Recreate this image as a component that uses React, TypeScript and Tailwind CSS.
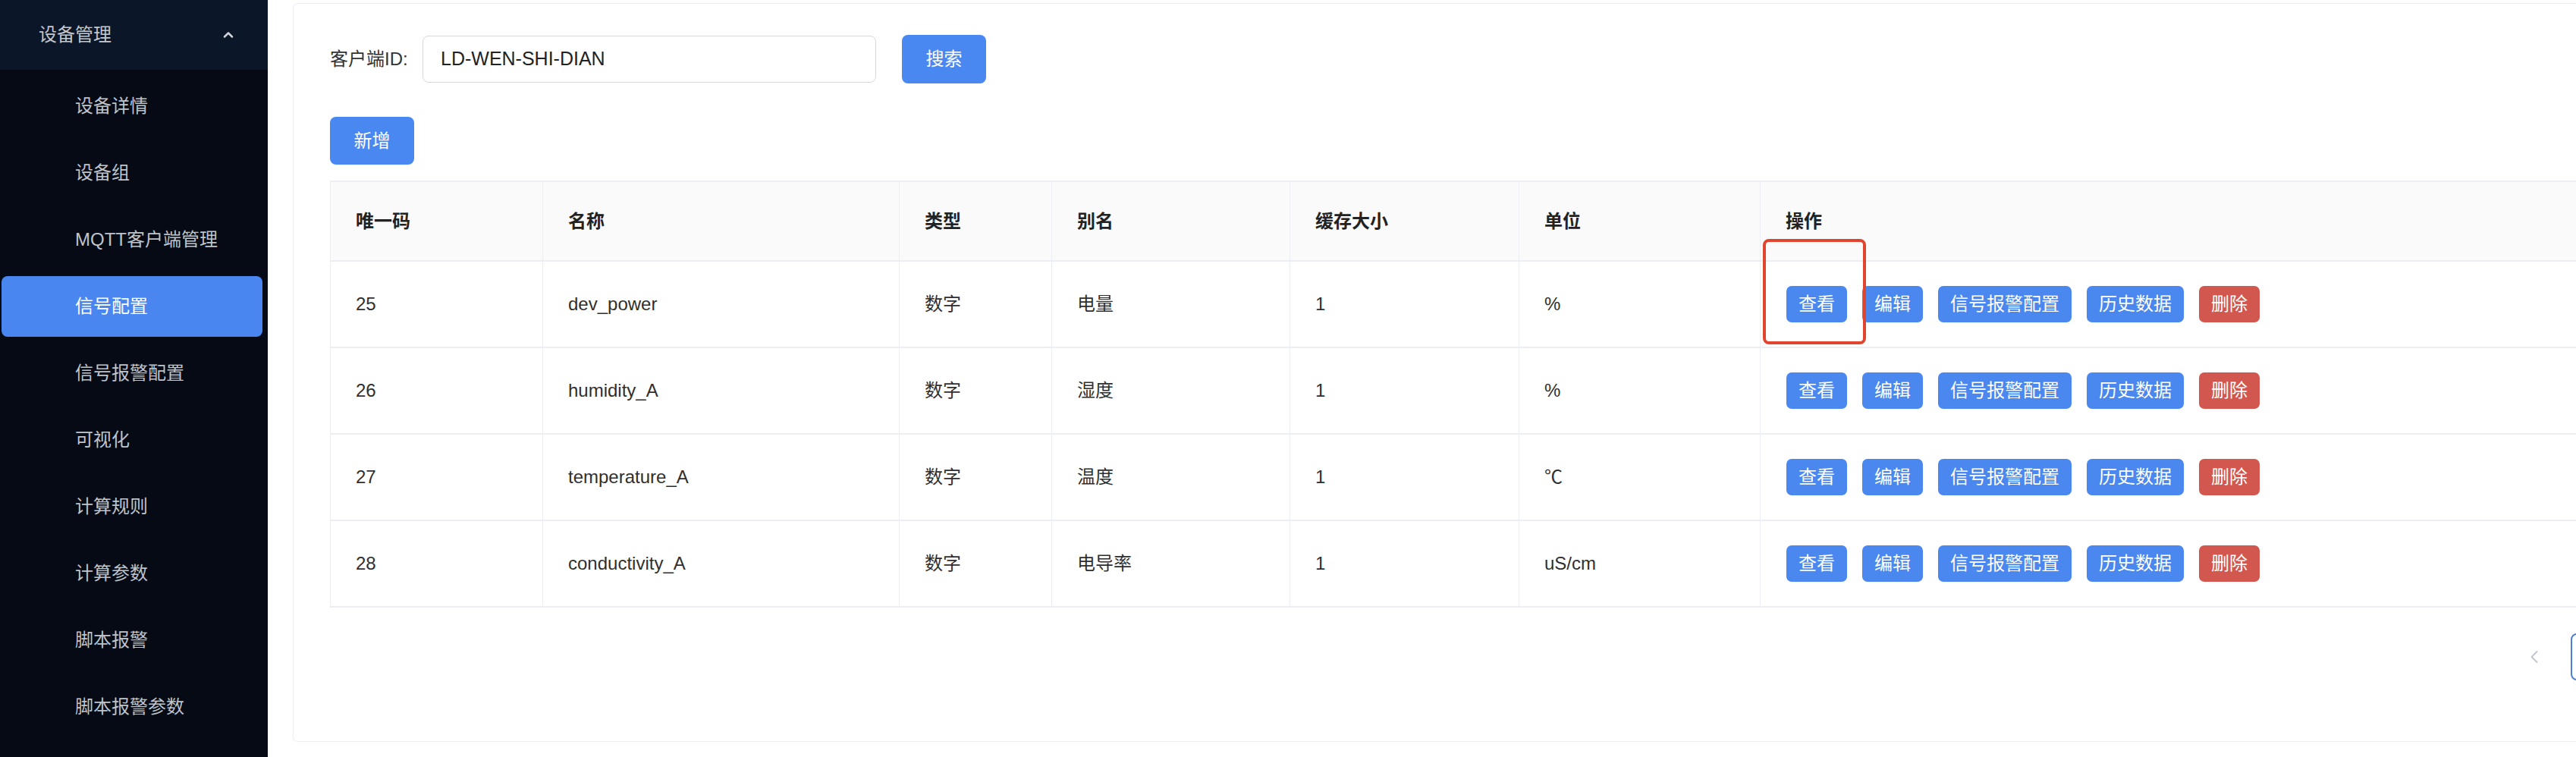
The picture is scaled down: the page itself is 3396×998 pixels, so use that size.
import { ChevronUp, ChevronLeft, ChevronRight } from 'lucide-react';

const menu = [
  '设备详情',
  '设备组',
  'MQTT客户端管理',
  '信号配置',
  '信号报警配置',
  '可视化',
  '计算规则',
  '计算参数',
  '脚本报警',
  '脚本报警参数',
];

const rows = [
  { id: '25', name: 'dev_power', type: '数字', alias: '电量', size: '1', unit: '%' },
  { id: '26', name: 'humidity_A', type: '数字', alias: '湿度', size: '1', unit: '%' },
  { id: '27', name: 'temperature_A', type: '数字', alias: '温度', size: '1', unit: '℃' },
  { id: '28', name: 'conductivity_A', type: '数字', alias: '电导率', size: '1', unit: 'uS/cm' },
];

const headers = ['唯一码', '名称', '类型', '别名', '缓存大小', '单位', '操作'];

const gridCols = 'grid grid-cols-[280px_470px_201px_314px_302px_318px_1fr]';

function OpButton({ label, red }: { label: string; red?: boolean }) {
  return (
    <div
      className={`h-[48px] px-[16px] rounded-[7px] flex items-center text-[24px] text-white ${
        red ? 'bg-[#d2574f]' : 'bg-[#4a87ef]'
      }`}
    >
      {label}
    </div>
  );
}

export default function App() {
  return (
    <div className="w-[3396px] h-[998px] overflow-hidden flex bg-white font-['Liberation_Sans','Noto_Sans_CJK_SC',sans-serif]">
      <aside className="w-[353px] shrink-0 h-full bg-[#050a15] flex flex-col">
        <div className="h-[92px] bg-[#0b1628] flex items-center justify-between pl-[51px] pr-[42px] text-[24px] text-[#c3c7ce]">
          <span>设备管理</span>
          <ChevronUp size={20} strokeWidth={3} className="text-[#d0d4da]" />
        </div>
        <nav className="flex flex-col pt-[4px]">
          {menu.map((m) => {
            const active = m === '信号配置';
            return (
              <div key={m} className="h-[88px] py-[4px] pl-[2px] pr-[7px]">
                <div
                  className={`h-full w-full rounded-[8px] flex items-center pl-[97px] text-[24px] ${
                    active ? 'bg-[#4a86ef] text-white' : 'text-[#bfc3ca]'
                  }`}
                >
                  {m}
                </div>
              </div>
            );
          })}
        </nav>
      </aside>

      <main className="flex-1 min-w-0 overflow-hidden pl-[33px]">
        <div className="relative w-[3162px] shrink-0 mt-[4px] border border-[#ebeef5] rounded-[6px] px-[48px] pt-[41px] pb-[80px]">
          <div className="flex items-center h-[64px]">
            <div className="w-[122px] shrink-0 text-[24px] text-[#333]">客户端ID:</div>
            <div className="w-[598px] h-[62px] border border-[#d5d8de] rounded-[8px] flex items-center px-[23px] text-[25px] text-[#222]">
              LD-WEN-SHI-DIAN
            </div>
            <div className="ml-[34px] w-[111px] h-[64px] rounded-[8px] bg-[#4a88f1] flex items-center justify-center text-[24px] text-white">
              搜索
            </div>
          </div>

          <div className="mt-[44px] w-[111px] h-[63px] rounded-[8px] bg-[#4a88f1] flex items-center justify-center text-[24px] text-white">
            新增
          </div>

          <div className="mt-[21px] border-t-2 border-l border-[#ebeef5]">
            <div className={`${gridCols} h-[105px] bg-[#fafafa] border-b-2 border-[#ebeef5]`}>
              {headers.map((h) => (
                <div
                  key={h}
                  className="border-r border-[#ebeef5] flex items-center pl-[33px] text-[24px] font-bold text-[#222]"
                >
                  {h}
                </div>
              ))}
            </div>
            {rows.map((r) => (
              <div key={r.id} className={`${gridCols} h-[114px] border-b-2 border-[#ebeef5]`}>
                {[r.id, r.name, r.type, r.alias, r.size, r.unit].map((v, i) => (
                  <div
                    key={i}
                    className="border-r border-[#ebeef5] flex items-center pl-[33px] text-[24px] text-[#2f2f2f]"
                  >
                    {v}
                  </div>
                ))}
                <div className="flex items-center gap-[20px] pl-[34px]">
                  <OpButton label="查看" />
                  <OpButton label="编辑" />
                  <OpButton label="信号报警配置" />
                  <OpButton label="历史数据" />
                  <OpButton label="删除" red />
                </div>
              </div>
            ))}
          </div>

          <div className="mt-[34px] h-[62px] flex items-center justify-end">
            <div className="w-[40px] flex items-center justify-center text-[#c0c4cc]">
              <ChevronLeft size={28} strokeWidth={1.6} />
            </div>
            <div className="ml-[28px] w-[62px] h-[62px] border-2 border-[#4a7fd4] rounded-[8px]" />
            <div className="ml-[8px] w-[40px] flex items-center justify-center text-[#c0c4cc]">
              <ChevronRight size={28} strokeWidth={1.6} />
            </div>
          </div>

          <div className="absolute left-[1937px] top-[310px] w-[136px] h-[139px] border-[4px] border-[#e0462f] rounded-[8px] pointer-events-none" />
        </div>
      </main>
    </div>
  );
}
